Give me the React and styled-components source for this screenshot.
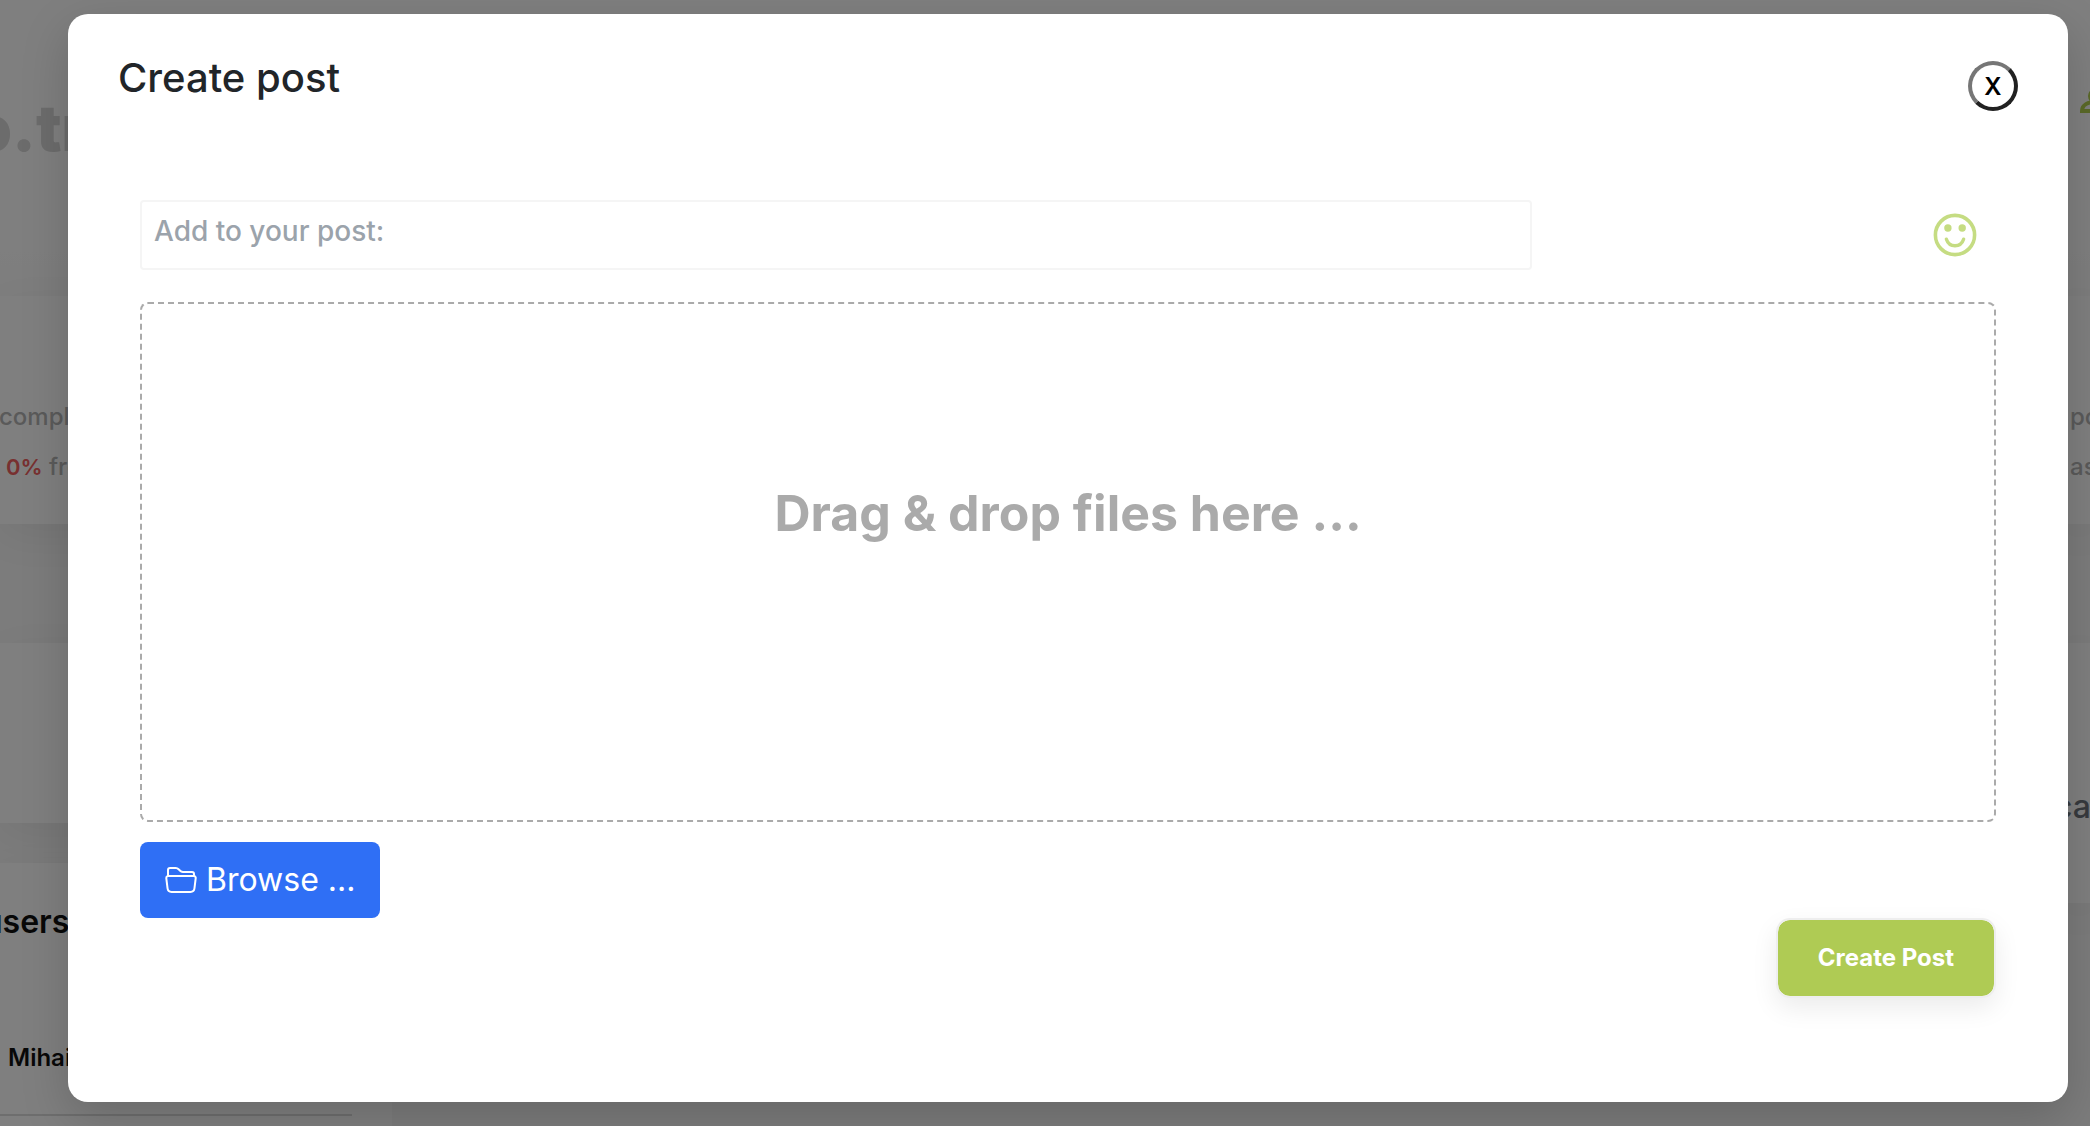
import React, { useState } from 'react';
import styled, { createGlobalStyle } from 'styled-components';

const GlobalStyle = createGlobalStyle`
  * {
    box-sizing: border-box;
  }

  body {
    margin: 0;
    background: #ffffff;
    font-family: Inter, 'Liberation Sans', sans-serif;
    color: #212529;
  }

  h1, h2, h3, p {
    margin: 0;
  }
`;

const Screen = styled.div`
  position: relative;
  height: 100vh;
  overflow: hidden;
`;

const Dashboard = styled.div`
  display: flex;
  justify-content: space-between;
  height: 100%;
  background: linear-gradient(#ffffff 296px, #f8f8f8 0);
`;

const Column = styled.div`
  display: flex;
  flex-direction: column;
  flex: 0 0 ${({ $width }) => $width};
  overflow: hidden;
  white-space: nowrap;
`;

const Hero = styled.header`
  height: 296px;
  padding-top: 88px;
  background: linear-gradient(#ffffff 80%, #fcfcfc 95%);
`;

const Brand = styled.h2`
  margin-left: -28px;
  font-size: 64px;
  font-weight: 900;
  line-height: 80px;
  color: #d8d8d8;
`;

const Panel = styled.section`
  flex: none;
  height: ${({ $height }) => $height};
  padding-top: ${({ $top }) => $top || '0'};
  background: #ffffff;
  box-shadow: 0 12px 40px rgba(0, 0, 0, 0.06);
`;

const Gap = styled.div`
  flex: none;
  height: ${({ $height }) => $height};
`;

const Stat = styled.p`
  margin-left: ${({ $left }) => $left || '0'};
  font-size: 24px;
  font-weight: 500;
  line-height: 50px;
  color: #b4b4b4;
`;

const Percent = styled.span`
  font-size: 22px;
  font-weight: 600;
  color: #f06060;
`;

const PanelTitle = styled.h3`
  margin-left: ${({ $left }) => $left};
  font-size: 32px;
  font-weight: ${({ $weight }) => $weight || 600};
  line-height: 40px;
  color: ${({ $color }) => $color || '#111111'};
`;

const UserRow = styled.p`
  width: 352px;
  margin-top: 80px;
  padding: 16px 8px 36px;
  border-bottom: 2px solid #dddddd;
  font-size: 24px;
  font-weight: 600;
  line-height: 40px;
  color: #111111;
`;

const UserIcon = styled.svg`
  display: block;
  width: 32px;
  height: 32px;
  margin-left: 12px;
  fill: none;
  stroke: #b4d250;
  stroke-width: 4;
`;

const Backdrop = styled.div`
  position: absolute;
  inset: 0;
  padding: 14px 22px 24px 68px;
  background: rgba(0, 0, 0, 0.5);
`;

const Modal = styled.form`
  display: flex;
  flex-direction: column;
  height: 100%;
  padding: 40px 50px;
  border-radius: 20px;
  background: #ffffff;
  box-shadow: 0 16px 48px rgba(0, 0, 0, 0.175);
`;

const ModalHeader = styled.header`
  display: flex;
  justify-content: space-between;
  align-items: flex-start;
`;

const Title = styled.h1`
  font-size: 40px;
  font-weight: 500;
  line-height: 48px;
`;

const CloseButton = styled.button`
  width: 50px;
  height: 50px;
  margin-top: 7px;
  padding: 0;
  border: 4px solid;
  border-color: #767676 #212121 #212121 #767676;
  border-radius: 50%;
  background: #ffffff;
  font: 600 24px Inter, sans-serif;
  color: #000000;
`;

const ModalBody = styled.div`
  display: flex;
  flex-direction: column;
  align-items: flex-start;
  margin-top: 89px;
  padding: 0 22px;
`;

const PostRow = styled.div`
  display: flex;
  justify-content: space-between;
  align-items: center;
  width: 100%;
`;

const PostInput = styled.input`
  width: 75%;
  height: 70px;
  padding: 0 14px 8px 12px;
  border: 2px solid #f5f5f5;
  border-radius: 4px;
  background: #ffffff;
  font: 500 28px Inter, sans-serif;
  color: #212529;

  &::placeholder {
    color: #9ba3ab;
    opacity: 1;
  }
`;

const EmojiButton = styled.button`
  display: flex;
  margin-right: 19px;
  padding: 0;
  border: 0;
  background: none;
  color: #c5dc82;

  svg {
    width: 44px;
    height: 44px;
  }
`;

const DropZone = styled.div`
  width: 100%;
  height: 520px;
  margin-top: 32px;
  padding: 179px 24px 0;
  border: 2px dashed #aaaaaa;
  border-radius: 8px;
  font-size: 50px;
  font-weight: 700;
  line-height: 60px;
  text-align: center;
  color: #aaaaaa;
`;

const BrowseButton = styled.button`
  display: flex;
  align-items: center;
  gap: 9px;
  height: 76px;
  margin-top: 20px;
  padding: 0 25px 2px;
  border: 0;
  border-radius: 8px;
  background: #2f6ff5;
  font: 400 32px Inter, sans-serif;
  color: #ffffff;

  svg {
    width: 32px;
    height: 32px;
  }
`;

const SubmitButton = styled.button`
  align-self: flex-end;
  height: 80px;
  padding: 0 40px 2px;
  border: 2px solid #eeeeee;
  border-radius: 14px;
  background: #afcb54;
  background-clip: padding-box;
  box-shadow: 0 10px 26px rgba(0, 0, 0, 0.08);
  font: 700 24px Inter, sans-serif;
  color: #ffffff;
`;

const SmileIcon = () => (
  <svg viewBox="0 0 44 44" fill="none" stroke="currentColor" strokeWidth="3.6" aria-hidden="true">
    <circle cx="22" cy="22" r="19.6" />
    <circle cx="14.9" cy="15" r="3.7" fill="currentColor" stroke="none" />
    <circle cx="29.2" cy="15" r="3.7" fill="currentColor" stroke="none" />
    <path d="M13.4 26.2c1.4 4.2 4.8 6.6 8.6 6.6s7.200-2.400 8.600-6.600" strokeWidth="3.4" strokeLinecap="round" />
  </svg>
);

const FolderIcon = () => (
  <svg viewBox="0 0 16 16" fill="currentColor" aria-hidden="true">
    <path d="M1 3.5A1.5 1.5 0 0 1 2.5 2h2.764c.958 0 1.76.56 2.311 1.184C7.985 3.648 8.48 4 9 4h4.5A1.5 1.5 0 0 1 15 5.5v.64c.57.265.94.876.856 1.546l-.64 5.124A2.5 2.5 0 0 1 12.733 15H3.266a2.5 2.5 0 0 1-2.481-2.19l-.64-5.124A1.5 1.5 0 0 1 1 6.14zM2 6h12v-.5a.5.5 0 0 0-.5-.5H9c-.964 0-1.71-.629-2.174-1.154C6.374 3.334 5.82 3 5.264 3H2.5a.5.5 0 0 0-.5.5zm-.367 1a.5.5 0 0 0-.496.562l.64 5.124A1.5 1.5 0 0 0 3.266 14h9.468a1.5 1.5 0 0 0 1.489-1.314l.64-5.124A.5.5 0 0 0 14.367 7z" />
  </svg>
);

const Background = () => (
  <Dashboard aria-hidden="true">
    <Column $width="392px">
      <Hero>
        <Brand>o.tr</Brand>
      </Hero>
      <Panel $height="228px" $top="96px">
        <Stat $left="-1px">compl</Stat>
        <Stat $left="6px">
          <Percent>0%</Percent> from
        </Stat>
      </Panel>
      <Gap $height="119px" />
      <Panel $height="180px" />
      <Gap $height="40px" />
      <Panel $height="263px" $top="39px">
        <PanelTitle $left="-17px">users</PanelTitle>
        <UserRow>Mihai</UserRow>
      </Panel>
    </Column>
    <Column $width="22px">
      <Hero>
        <UserIcon viewBox="0 0 32 32">
          <circle cx="16" cy="8" r="6" />
          <path d="M2 23c0-6 6-9 14-9s14 3 14 9z" />
        </UserIcon>
      </Hero>
      <Panel $height="228px" $top="96px">
        <Stat $left="2px">posts</Stat>
        <Stat $left="2px">as</Stat>
      </Panel>
      <Gap $height="119px" />
      <Panel $height="260px" $top="144px">
        <PanelTitle $left="-14px" $weight={500} $color="#6f757d">
          cal
        </PanelTitle>
      </Panel>
    </Column>
  </Dashboard>
);

const App = () => {
  const [text, setText] = useState('');

  return (
    <Screen>
      <GlobalStyle />
      <Background />
      <Backdrop>
        <Modal role="dialog" aria-labelledby="modal-title" onSubmit={(e) => e.preventDefault()}>
          <ModalHeader>
            <Title id="modal-title">Create post</Title>
            <CloseButton type="button" aria-label="Close">
              X
            </CloseButton>
          </ModalHeader>
          <ModalBody>
            <PostRow>
              <PostInput
                aria-label="Add to your post"
                placeholder="Add to your post:"
                value={text}
                onChange={(e) => setText(e.target.value)}
              />
              <EmojiButton type="button" aria-label="Insert emoji">
                <SmileIcon />
              </EmojiButton>
            </PostRow>
            <DropZone>Drag &amp; drop files here ...</DropZone>
            <BrowseButton type="button">
              <FolderIcon />
              Browse ...
            </BrowseButton>
            <SubmitButton type="submit">Create Post</SubmitButton>
          </ModalBody>
        </Modal>
      </Backdrop>
    </Screen>
  );
};

export default App;
